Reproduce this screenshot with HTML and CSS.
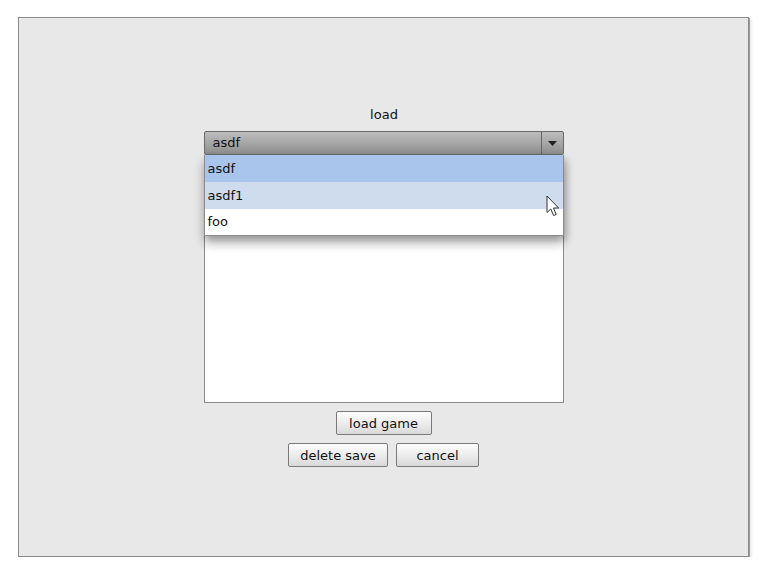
FILE: index.html
```html
<!DOCTYPE html>
<html>
<head>
<meta charset="utf-8">
<link rel="stylesheet" href="styles.css">
</head>
<body>
<div class="panel">
  <div class="column">
    <div class="title">load</div>
    <div class="combo-wrap">
      <div class="combo">
        <span class="combo-text">asdf</span>
        <span class="combo-arrow"><svg width="9" height="5" viewBox="0 0 9 5"><path d="M0 0H9L4.5 5Z" fill="#222"/></svg></span>
      </div>
      <div class="popup">
        <div class="item selected">asdf</div>
        <div class="item hover">asdf1</div>
        <div class="item">foo</div>
        <svg class="cursor" width="14" height="22" viewBox="0 0 14 22"><path d="M1 1V17.5L4.8 14L7.6 20.5L10.2 19.4L7.5 13H12.6Z" fill="#fff" stroke="#333" stroke-width="1" stroke-linejoin="round"/></svg>
      </div>
    </div>
    <div class="listbox"></div>
    <button class="btn load">load game</button>
    <div class="row">
      <button class="btn del">delete save</button>
      <button class="btn cancel">cancel</button>
    </div>
  </div>
</div>
</body>
</html>
```
FILE: styles.css
```css
html, body {
  margin: 0;
  padding: 0;
  background: #ffffff;
}
body {
  font-family: "DejaVu Sans", "Liberation Sans", sans-serif;
  font-size: 13px;
  color: #111111;
}
.panel {
  margin: 17px 0 0 18px;
  width: 729px;
  height: 538px;
  background: #e8e8e8;
  border: 1px solid #8a8a8a;
  box-shadow: 1px 1px 0 #9a9a9a, 2px 2px 3px rgba(0,0,0,0.12);
  display: flex;
  justify-content: center;
}
.column {
  margin-top: 88px;
  width: 360px;
  display: flex;
  flex-direction: column;
  align-items: center;
}
.title {
  height: 17px;
  line-height: 17px;
  margin-bottom: 8px;
  margin-left: 1px;
}
.combo-wrap {
  position: relative;
  width: 360px;
  z-index: 2;
}
.combo {
  height: 22px;
  border: 1px solid #6a6a6a;
  border-radius: 2px;
  background: linear-gradient(#bdbdbd, #a4a4a4 55%, #8c8c8c);
  display: flex;
  align-items: center;
}
.combo-text {
  flex: 1;
  padding-left: 8px;
  line-height: 22px;
  color: #111111;
}
.combo-arrow {
  width: 21px;
  height: 22px;
  border-left: 1px solid #666666;
  display: flex;
  align-items: center;
  justify-content: center;
}
.popup {
  position: absolute;
  top: 24px;
  left: 0;
  right: 0;
  background: #ffffff;
  border: 1px solid #8a8a8a;
  border-top: none;
  box-shadow: 0 7px 10px rgba(0,0,0,0.32), 3px 3px 6px rgba(0,0,0,0.15);
}
.item {
  height: 26px;
  line-height: 26px;
  padding-left: 3px;
  color: #111111;
}
.item.selected {
  height: 27px;
  line-height: 27px;
  background: #a9c5ec;
}
.item.hover {
  height: 27px;
  line-height: 27px;
  background: #cedcee;
}
.cursor {
  position: absolute;
  left: 341px;
  top: 40px;
}
.listbox {
  width: 358px;
  height: 246px;
  background: #ffffff;
  border: 1px solid #8a8a8a;
}
.btn {
  font-family: "DejaVu Sans", "Liberation Sans", sans-serif;
  font-size: 13px;
  color: #111111;
  height: 24px;
  padding: 0;
  border: 1px solid #7a7a7a;
  border-radius: 2px;
  background: linear-gradient(#fdfdfd, #e9e9e9 60%, #d9d9d9);
}
.load {
  width: 96px;
  margin-top: 8px;
}
.row {
  margin-top: 8px;
  display: flex;
  gap: 8px;
}
.del {
  width: 100px;
}
.cancel {
  width: 83px;
}
```
